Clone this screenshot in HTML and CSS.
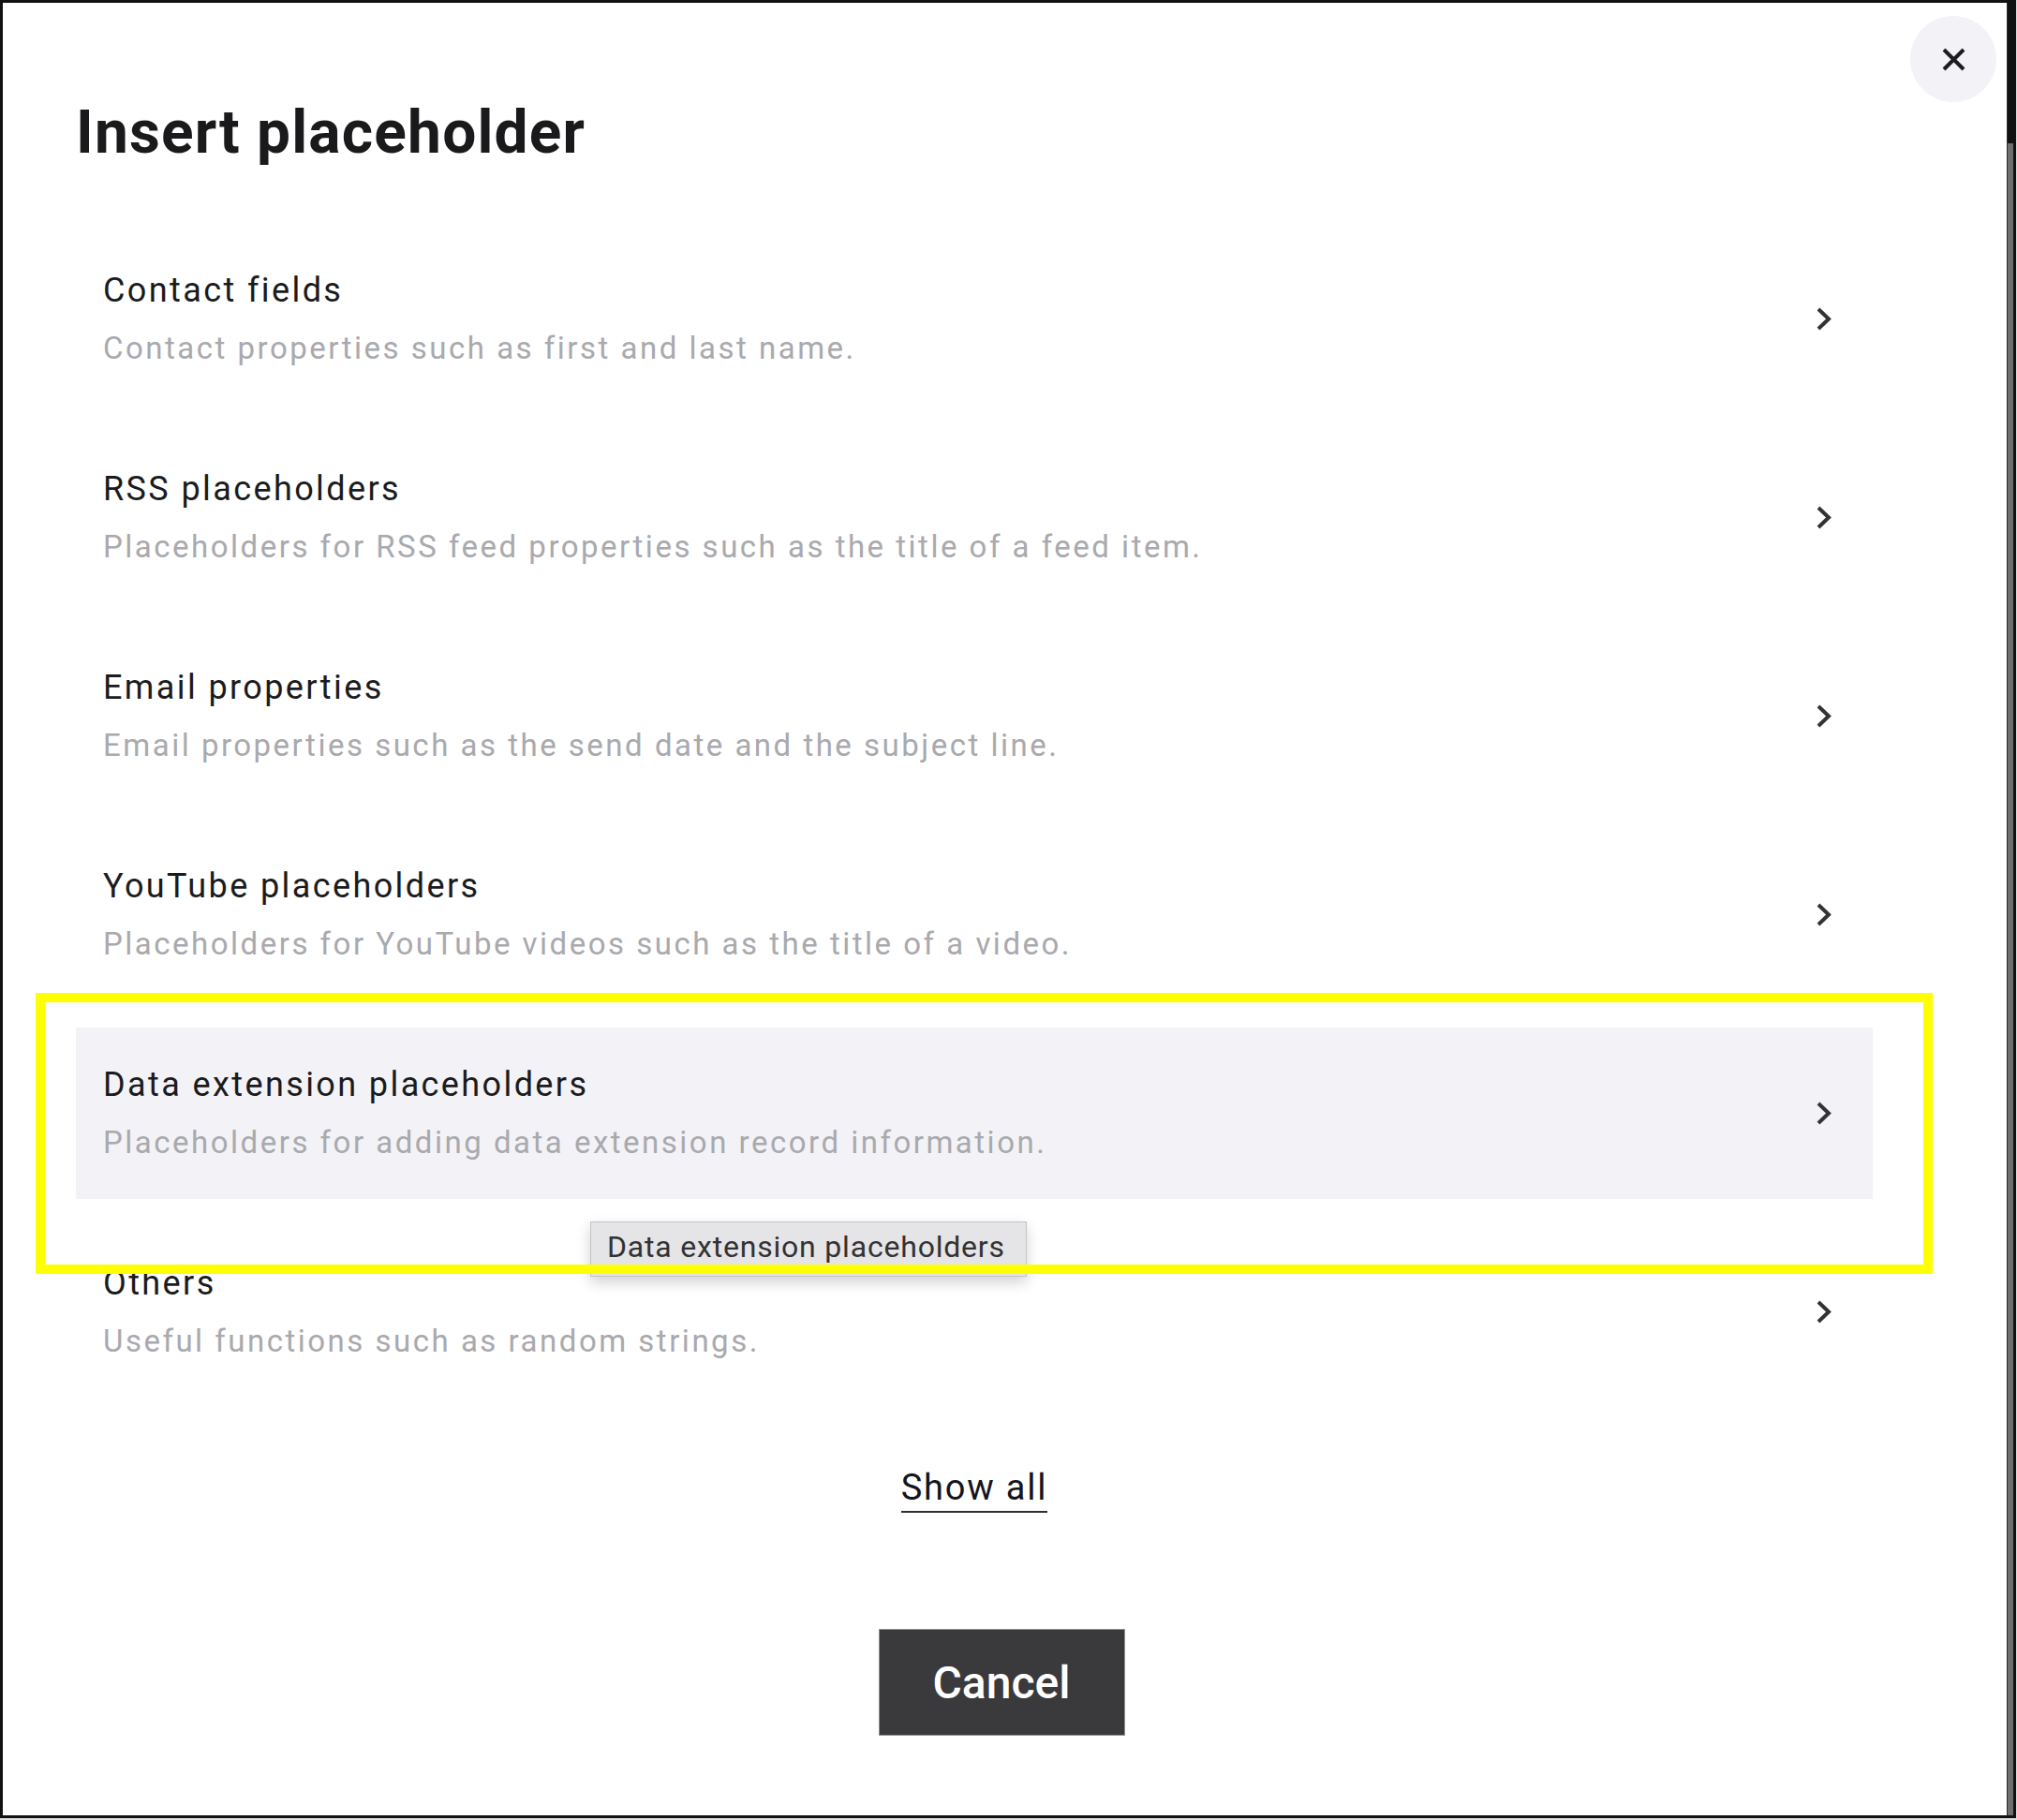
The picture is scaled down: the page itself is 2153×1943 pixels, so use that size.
FILE: index.html
```html
<html>
<head>
<meta charset="utf-8">
<title>Insert placeholder</title>
<link rel="stylesheet" href="styles.css">
</head>
<body>
<div class="frame">
	<div class="dialog">
		<button class="closeBtn" aria-label="Close">
			<svg width="25" height="25" viewBox="0 0 25 25"><path d="M2 2 L23 23 M23 2 L2 23" stroke="#1d1d1f" stroke-width="4" fill="none"/></svg>
		</button>

		<div class="dialogHead">
			<h1 class="dialogTitle">Insert placeholder</h1>
		</div>

		<div class="groupList">
			<div class="group">
				<div class="groupText">
					<div class="groupName">Contact fields</div>
					<div class="groupDesc">Contact properties such as first and last name.</div>
				</div>
				<svg class="chevron" width="16" height="25" viewBox="0 0 16 25"><path d="M2 2 L13 12.5 L2 23" stroke="#333335" stroke-width="4" fill="none"/></svg>
			</div>
			<div class="group">
				<div class="groupText">
					<div class="groupName">RSS placeholders</div>
					<div class="groupDesc">Placeholders for RSS feed properties such as the title of a feed item.</div>
				</div>
				<svg class="chevron" width="16" height="25" viewBox="0 0 16 25"><path d="M2 2 L13 12.5 L2 23" stroke="#333335" stroke-width="4" fill="none"/></svg>
			</div>
			<div class="group">
				<div class="groupText">
					<div class="groupName">Email properties</div>
					<div class="groupDesc">Email properties such as the send date and the subject line.</div>
				</div>
				<svg class="chevron" width="16" height="25" viewBox="0 0 16 25"><path d="M2 2 L13 12.5 L2 23" stroke="#333335" stroke-width="4" fill="none"/></svg>
			</div>
			<div class="group">
				<div class="groupText">
					<div class="groupName">YouTube placeholders</div>
					<div class="groupDesc">Placeholders for YouTube videos such as the title of a video.</div>
				</div>
				<svg class="chevron" width="16" height="25" viewBox="0 0 16 25"><path d="M2 2 L13 12.5 L2 23" stroke="#333335" stroke-width="4" fill="none"/></svg>
			</div>
			<div class="group hover">
				<div class="groupText">
					<div class="groupName">Data extension placeholders</div>
					<div class="groupDesc">Placeholders for adding data extension record information.</div>
				</div>
				<svg class="chevron" width="16" height="25" viewBox="0 0 16 25"><path d="M2 2 L13 12.5 L2 23" stroke="#333335" stroke-width="4" fill="none"/></svg>
				<div class="tooltip">Data extension placeholders</div>
				<div class="markBox"></div>
			</div>
			<div class="group">
				<div class="groupText">
					<div class="groupName">Others</div>
					<div class="groupDesc">Useful functions such as random strings.</div>
				</div>
				<svg class="chevron" width="16" height="25" viewBox="0 0 16 25"><path d="M2 2 L13 12.5 L2 23" stroke="#333335" stroke-width="4" fill="none"/></svg>
			</div>
		</div>

		<div class="showAll">
			<a class="showAllLink">Show all</a>
		</div>

		<div class="actions">
			<button class="cancelBtn">Cancel</button>
		</div>
	</div>
	<div class="scrollbar"><div class="scrollThumb"></div></div>
</div>
</body>
</html>
```

FILE: styles.css
```css
html, body
{
	margin: 0;
	padding: 0;
}
body
{
	background-color: #dcdcdc;
	font-family: Roboto, "Liberation Sans", sans-serif;
	color: #1b1b1d;
}
.frame
{
	box-sizing: border-box;
	display: flex;
	width: 2152px;
	height: 1941px;
	border: 3px solid #111111;
	background-color: #ffffff;
	overflow: hidden;
}
.dialog
{
	position: relative;
	flex: 1;
	display: flex;
	flex-direction: column;
}
.scrollbar
{
	width: 6px;
	background-color: #6e6e6e;
	border-left: 1px solid #2a2a2a;
}
.scrollThumb
{
	height: 150px;
	background-color: #111111;
}

/* close button in the corner */
.closeBtn
{
	position: absolute;
	top: 14px;
	right: 11px;
	width: 92px;
	height: 92px;
	border: none;
	border-radius: 50%;
	background-color: #f3f2f7;
	display: flex;
	align-items: center;
	justify-content: center;
	padding: 0;
}

.dialogHead
{
	padding: 99px 143px 0 78px;
}
.dialogTitle
{
	margin: 0;
	font-size: 64px;
	line-height: 80px;
	font-weight: 700;
	letter-spacing: 1.2px;
	color: #1a1a1c;
}

.groupList
{
	display: flex;
	flex-direction: column;
	gap: 29px;
	margin-top: 67px;
	padding: 0 143px 0 78px;
}
.group
{
	position: relative;
	display: flex;
	align-items: center;
	justify-content: space-between;
	height: 183px;
	padding: 0 44px 0 29px;
}
.group.hover
{
	background-color: #f3f3f7;
}
.groupName
{
	font-size: 36px;
	line-height: 44px;
	letter-spacing: 2.4px;
	color: #1b1b1d;
}
.groupDesc
{
	margin-top: 18px;
	font-size: 33px;
	line-height: 44px;
	letter-spacing: 2.5px;
	color: #a9a9ae;
}
.chevron
{
	flex-shrink: 0;
}

.tooltip
{
	position: absolute;
	left: 549px;
	top: 207px;
	z-index: 1;
	padding: 7px 22px 12px 17px;
	font-size: 32px;
	line-height: 38px;
	letter-spacing: 0.8px;
	color: #323234;
	background-color: #e5e5e7;
	border: 1px solid #c4c4c6;
	box-shadow: 0 6px 14px rgba(0, 0, 0, 0.18);
	white-space: nowrap;
}
.markBox
{
	position: absolute;
	left: -43px;
	right: -64px;
	top: -37px;
	bottom: -80px;
	z-index: 2;
	border: 10px solid #ffff00;
}

.showAll
{
	display: flex;
	justify-content: center;
	margin-top: 73px;
	padding: 0 143px 0 78px;
}
.showAllLink
{
	display: inline-block;
	font-size: 38px;
	line-height: 46px;
	letter-spacing: 1.8px;
	color: #14141f;
	padding-bottom: 2px;
	border-bottom: 2px solid #2e2e32;
}

.actions
{
	display: flex;
	justify-content: center;
	margin-top: 124px;
	padding-right: 7px;
}
.cancelBtn
{
	box-sizing: border-box;
	width: 263px;
	height: 114px;
	border: 1px solid #8e8e90;
	background-color: #3a3a3c;
	color: #ffffff;
	font-family: Roboto, "Liberation Sans", sans-serif;
	font-size: 48px;
	font-weight: 500;
	letter-spacing: 0;
}
```
